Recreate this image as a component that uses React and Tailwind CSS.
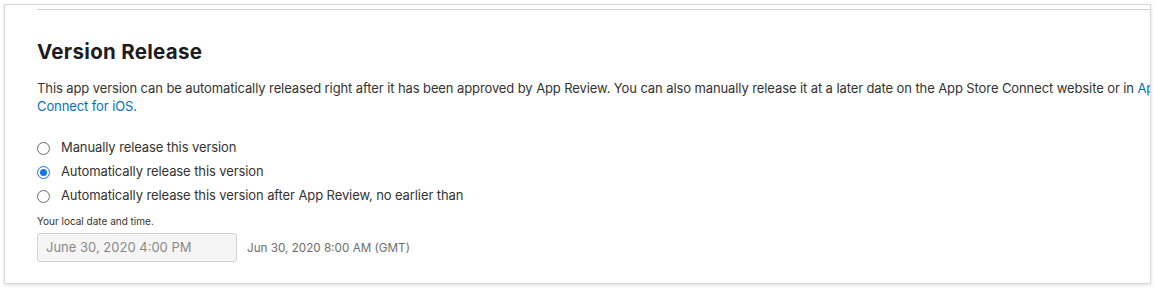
import React, { useState } from 'react';

const OPTIONS = [
  'Manually release this version',
  'Automatically release this version',
  'Automatically release this version after App Review, no earlier than',
];

function Radio({ checked }) {
  return checked ? (
    <span className="w-[13px] h-[13px] rounded-full border border-[#1a73e8] bg-white flex items-center justify-center shrink-0">
      <span className="w-[7px] h-[7px] rounded-full bg-[#1a73e8]" />
    </span>
  ) : (
    <span className="w-[13px] h-[13px] rounded-full border border-[#6b6b6b] bg-white shrink-0" />
  );
}

export default function App() {
  const [selected, setSelected] = useState(1);

  return (
    <div className="w-[1156px] h-[288px] bg-white pt-[4px] pl-[4px]" style={{ fontFamily: 'Inter, "Liberation Sans", sans-serif' }}>
      <div className="w-[1147px] h-[280px] bg-white border border-[#d9d9d9] shadow-[0_1px_3px_rgba(0,0,0,0.15)] overflow-hidden pl-[32px]">
        <div className="mt-[4px] h-px bg-[#d2d2d2]" />

        <h2 className="mt-[30px] text-[20.5px] leading-[24px] font-bold text-[#1d1d1f] tracking-[0.3px]">Version Release</h2>

        <p className="mt-[15px] text-[13px] leading-[18px] text-[#333] whitespace-nowrap tracking-[-0.1px]">
          This app version can be automatically released right after it has been approved by App Review. You can also manually release it at a later date on the App Store Connect website or in <span className="text-[#0070c9]">App Store</span>
          <br />
          <span className="text-[#0070c9]">Connect for iOS.</span>
        </p>

        <div className="mt-[21px] flex flex-col">
          {OPTIONS.map((label, i) => (
            <label key={i} className="h-[24px] flex items-center gap-[11px] cursor-pointer" onClick={() => setSelected(i)}>
              <Radio checked={selected === i} />
              <span className="text-[13px] text-[#333] tracking-[-0.1px]">{label}</span>
            </label>
          ))}
        </div>

        <div className="mt-[7px] text-[10px] leading-[12px] text-[#333]">Your local date and time.</div>

        <div className="mt-[6px] flex items-center gap-[10px]">
          <div className="w-[200px] h-[29px] rounded-[3px] border border-[#d2d2d2] bg-[#f5f5f5] px-[8px] flex items-center text-[13px] text-[#8a8a8a]">
            June 30, 2020 4:00 PM
          </div>
          <span className="mt-[2px] text-[11.7px] text-[#6e6e6e]">Jun 30, 2020 8:00 AM (GMT)</span>
        </div>
      </div>
    </div>
  );
}
